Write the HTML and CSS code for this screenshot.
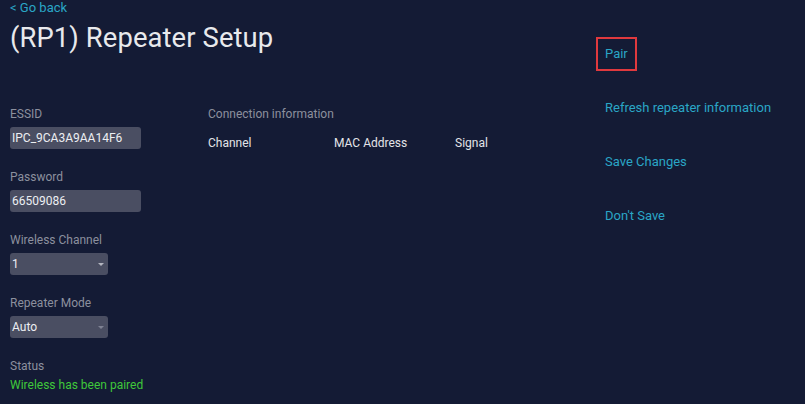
FILE: index.html
```html
<!DOCTYPE html>
<html lang="en">
<head>
<meta charset="utf-8">
<title>(RP1) Repeater Setup</title>
<link rel="stylesheet" href="styles.css">
</head>
<body>
<div class="page">
  <main class="main">
    <header class="header">
      <a class="back" href="#">&lt; Go back</a>
      <h1 class="title">(RP1) Repeater Setup</h1>
    </header>
    <div class="form-row">
      <section class="settings">
        <div class="field">
          <div class="label">ESSID</div>
          <div class="input wide">IPC_9CA3A9AA14F6</div>
        </div>
        <div class="field">
          <div class="label">Password</div>
          <div class="input wide">66509086</div>
        </div>
        <div class="field">
          <div class="label">Wireless Channel</div>
          <div class="input select">1<span class="caret"></span></div>
        </div>
        <div class="field">
          <div class="label">Repeater Mode</div>
          <div class="input select">Auto<span class="caret dim"></span></div>
        </div>
        <div class="field">
          <div class="label">Status</div>
          <div class="status">Wireless has been paired</div>
        </div>
      </section>
      <section class="connection">
        <div class="label">Connection information</div>
        <div class="conn-head">
          <span class="col-channel">Channel</span>
          <span class="col-mac">MAC Address</span>
          <span class="col-signal">Signal</span>
        </div>
      </section>
    </div>
  </main>
  <aside class="actions">
    <a class="action pair" href="#">Pair</a>
    <a class="action" href="#">Refresh repeater information</a>
    <a class="action" href="#">Save Changes</a>
    <a class="action" href="#">Don't Save</a>
  </aside>
</div>
</body>
</html>
```
FILE: styles.css
```css
html, body {
  margin: 0;
  padding: 0;
  background: #141b35;
  height: 100%;
  overflow: hidden;
}
body {
  font-family: Roboto, "Liberation Sans", Arial, sans-serif;
  color: #e3e4e8;
}
a { text-decoration: none; }

.page {
  display: flex;
  height: 404px;
}
.main {
  width: 586px;
  padding-left: 10px;
  box-sizing: border-box;
}
.header {
  display: flex;
  flex-direction: column;
}
.back {
  color: #2aa6c6;
  font-size: 13px;
  line-height: 15px;
}
.title {
  margin: 7px 0 0;
  font-size: 27.4px;
  font-weight: 400;
  line-height: 32px;
  color: #e8e9ec;
  letter-spacing: 0.1px;
}
.form-row {
  display: flex;
  margin-top: 53px;
}
.settings {
  width: 198px;
  display: flex;
  flex-direction: column;
  gap: 21px;
}
.field {
  display: flex;
  flex-direction: column;
  gap: 5px;
}
.label {
  font-size: 12px;
  line-height: 15px;
  color: #8c909e;
}
.input {
  height: 22px;
  box-sizing: border-box;
  background: #4a4e62;
  border-radius: 3px;
  font-size: 12px;
  line-height: 22px;
  padding-left: 2px;
  color: #eceef2;
  position: relative;
}
.wide { width: 131px; }
.select { width: 98px; }
.caret {
  position: absolute;
  right: 4px;
  top: 10px;
  width: 0;
  height: 0;
  border-left: 3px solid transparent;
  border-right: 3px solid transparent;
  border-top: 3px solid #b4b6c0;
}
.caret.dim { border-top-color: #7f8293; }
.status {
  font-size: 12px;
  line-height: 15px;
  color: #3fc83a;
  margin-top: -1px;
}
.connection {
  display: flex;
  flex-direction: column;
  gap: 14px;
}
.conn-head {
  display: flex;
  font-size: 12px;
  line-height: 15px;
  color: #e3e4e8;
}
.col-channel { width: 126px; }
.col-mac { width: 121px; }

.actions {
  display: flex;
  flex-direction: column;
  align-items: flex-start;
  padding-top: 46px;
  padding-left: 19px;
  gap: 39px;
}
.action {
  color: #2aa6c6;
  font-size: 13px;
  line-height: 15px;
}
.pair {
  border: 2px solid #e0393e;
  padding: 7px 7px 8px 7px;
  margin: -9px 0 -10px -9px;
}
```
